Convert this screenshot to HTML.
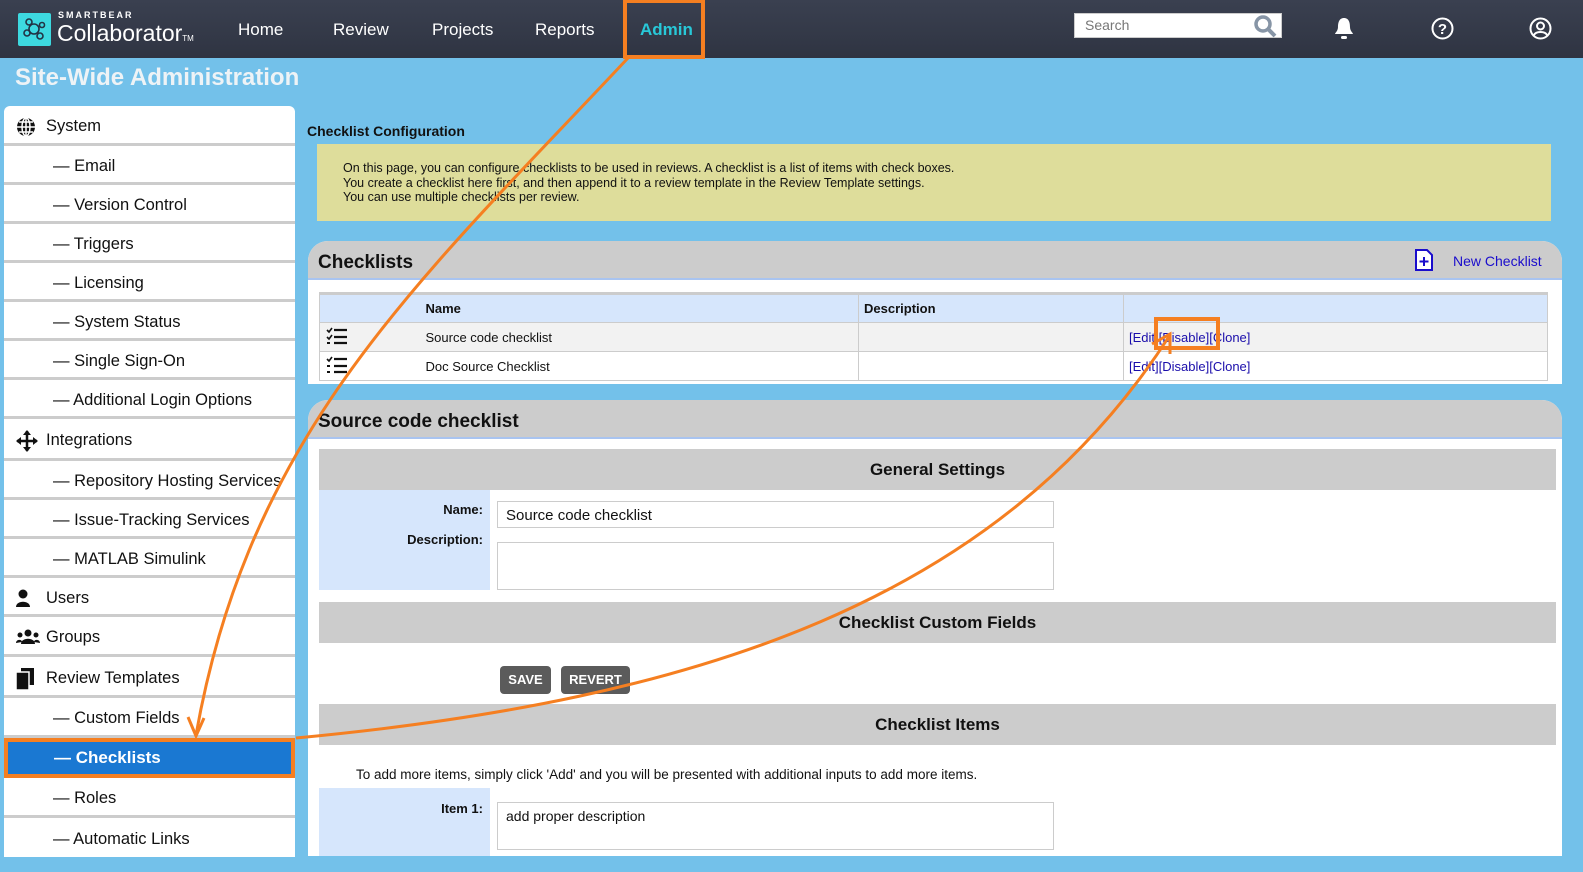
<!DOCTYPE html>
<html><head><meta charset="utf-8"><style>
*{box-sizing:border-box;margin:0;padding:0}
body{width:1583px;height:872px;overflow:hidden;background:#73c1ea;font-family:"Liberation Sans",Arial,sans-serif;position:relative;color:#111}
.nav{position:absolute;left:0;top:0;width:1583px;height:58px;background:linear-gradient(#3a4050,#2f3442)}
.nav .it{position:absolute;top:20px;color:#fff;font-size:17px}
.abs{position:absolute}
.side{position:absolute;left:4px;top:106px;width:291px;background:#fff;border-radius:6px 6px 0 0;overflow:hidden}
.side div{height:39px;border-bottom:3px solid #ccc;font-size:16.5px;display:flex;align-items:center;padding-left:49px;padding-top:4px;color:#111}
.side div.top{padding-left:42px;position:relative}
.side div.top svg{position:absolute;left:12px;top:11px}
.panel{position:absolute;left:308px;width:1254px;background:#fff}
.ph{background:#ccc;border-bottom:2px solid #a9c4f0;border-radius:20px 20px 0 0;height:39px;font-weight:bold;font-size:19px;padding:11px 0 0 10px}
table{border-collapse:collapse;font-size:13px;table-layout:fixed}
td{border:1px solid #ccc;height:29px}
.gh{position:absolute;left:11px;width:1237px;background:#ccc;height:41px;text-align:center;font-weight:bold;font-size:17px;line-height:41px}
.lab{position:absolute;left:11px;width:171px;background:#d6e6fc;text-align:right;font-weight:bold;font-size:13px;padding-right:7px}
.inp{position:absolute;left:189px;width:557px;border:1px solid #ccc;font-size:15px;padding:5px 8px}
.btn{position:absolute;top:666px;height:28px;background:#5b5b5b;color:#fff;font-weight:bold;font-size:13px;border-radius:4px;line-height:28px;text-align:center}
a{color:#1a0dab}
</style></head><body>
<div class="nav">
 <div class="abs" style="left:18px;top:13px;width:33px;height:33px;background:#3dd9e0;border-radius:2px"><svg width="33" height="33" viewBox="0 0 33 33"><g fill="none" stroke="#234" stroke-width="1.6"><circle cx="16" cy="16" r="5"/><circle cx="11" cy="9" r="3"/><circle cx="9" cy="20" r="3"/><circle cx="22" cy="23" r="3"/><circle cx="24" cy="12" r="2.5"/></g></svg></div>
 <div class="abs" style="left:58px;top:10px;color:#fff;font-size:9px;letter-spacing:2px;font-weight:bold">SMARTBEAR</div>
 <div class="abs" style="left:57px;top:20px;color:#fff;font-size:23px">Collaborator<span style="font-size:8px">TM</span></div>
 <div class="it" style="left:238px">Home</div>
 <div class="it" style="left:333px">Review</div>
 <div class="it" style="left:432px">Projects</div>
 <div class="it" style="left:535px">Reports</div>
 <div class="it" style="left:640px;color:#28c8d8;font-weight:bold">Admin</div>
 <div class="abs" style="left:1074px;top:13px;width:208px;height:25px;background:#fff;border:1px solid #ccc;color:#777;font-size:14px;padding:3px 10px">Search</div>
 <svg class="abs" style="left:1253px;top:14px" width="26" height="24"><circle cx="10" cy="10" r="7" fill="none" stroke="#8795a6" stroke-width="3.5"/><path d="M15 15l7 7" stroke="#8795a6" stroke-width="4"/></svg>
 <svg class="abs" style="left:1333px;top:17px" width="22" height="24"><path d="M11 1c-5 0-6 5-6 9 0 4-3 6-3 7h18c0-1-3-3-3-7 0-4-1-9-6-9z" fill="#fff"/><rect x="8" y="19" width="6" height="3" rx="1.5" fill="#fff"/></svg>
 <svg class="abs" style="left:1430px;top:16px" width="25" height="25"><circle cx="12.5" cy="12.5" r="10" fill="none" stroke="#fff" stroke-width="2"/><text x="12.5" y="18" fill="#fff" font-size="15" font-weight="bold" text-anchor="middle" font-family="Liberation Sans">?</text></svg>
 <svg class="abs" style="left:1528px;top:16px" width="25" height="25"><circle cx="12.5" cy="12.5" r="10" fill="none" stroke="#fff" stroke-width="2"/><circle cx="12.5" cy="10" r="3.5" fill="none" stroke="#fff" stroke-width="2"/><path d="M6 19c2-4 11-4 13 0" fill="none" stroke="#fff" stroke-width="2"/></svg>
</div>
<div class="abs" style="left:15px;top:64px;color:#eef3f6;font-size:24px;font-weight:bold">Site-Wide Administration</div>

<div class="side">
 <div class="top" style="height:40px"><svg width="20" height="20"><circle cx="10" cy="10" r="9" fill="#111"/><path d="M1 10h18M10 1v18M3 5h14M3 15h14" stroke="#fff" stroke-width="1.5"/><ellipse cx="10" cy="10" rx="4" ry="9" fill="none" stroke="#fff" stroke-width="1.5"/></svg>System</div>
 <div>— Email</div><div>— Version Control</div><div>— Triggers</div><div>— Licensing</div><div>— System Status</div><div>— Single Sign-On</div><div>— Additional Login Options</div>
 <div class="top" style="height:42px"><svg width="22" height="22"><path d="M11 1v20M1 11h20" stroke="#111" stroke-width="2.5"/><path d="M11 0l-4 5h8zM11 22l-4-5h8zM0 11l5-4v8zM22 11l-5-4v8z" fill="#111"/></svg>Integrations</div>
 <div>— Repository Hosting Services</div><div>— Issue-Tracking Services</div><div>— MATLAB Simulink</div>
 <div class="top"><svg width="20" height="20"><circle cx="7" cy="5" r="4.5" fill="#111"/><path d="M0 18c0-7 14-7 14 0z" fill="#111"/></svg>Users</div>
 <div class="top" style="height:40px"><svg width="24" height="20"><circle cx="12" cy="5" r="3.5" fill="#111"/><circle cx="4" cy="7" r="2.5" fill="#111"/><circle cx="20" cy="7" r="2.5" fill="#111"/><path d="M5 16c0-7 14-7 14 0zM0 15c0-4 6-4 6-1zM18 14c0-3 6-3 6 1z" fill="#111"/></svg>Groups</div>
 <div class="top" style="height:41px"><svg width="20" height="22"><rect x="5" y="0" width="13" height="17" fill="#111"/><rect x="0" y="4" width="13" height="18" fill="#111" stroke="#fff" stroke-width="1.5"/></svg>Review Templates</div>
 <div style="height:40px">— Custom Fields</div>
 <div style="height:40px;background:#1a78d2;color:#fff;font-weight:bold;font-size:17px;border:4px solid #f57f21;padding-left:46px;padding-top:0">— Checklists</div>
 <div style="height:40px">— Roles</div>
 <div style="height:39px;border-bottom:none">— Automatic Links</div>
</div>

<div class="abs" style="left:307px;top:123px;font-weight:bold;font-size:14px">Checklist Configuration</div>
<div class="abs" style="left:317px;top:144px;width:1234px;height:77px;background:#dedd9b;font-size:12.5px;padding:17px 0 0 26px;line-height:14.5px">On this page, you can configure checklists to be used in reviews. A checklist is a list of items with check boxes.<br>You create a checklist here first, and then append it to a review template in the Review Template settings.<br>You can use multiple checklists per review.</div>

<div class="panel" style="top:241px;height:143px;border-radius:20px 20px 0 0">
 <div class="ph">Checklists</div>
 <svg class="abs" style="left:1107px;top:8px" width="18" height="22"><path d="M1 1h11l5 5v15H1z" fill="#fff" stroke="#1a0dcc" stroke-width="2"/><path d="M9 8v9M4.5 12.5h9" stroke="#1a0dcc" stroke-width="2"/></svg>
 <div class="abs" style="left:1145px;top:12px;color:#1a0dcc;font-size:14px">New Checklist</div>
 <table class="abs" style="left:11px;top:51px;width:1229px;border-top:3px solid #ccc">
  <colgroup><col style="width:98px"><col style="width:441px"><col style="width:265px"><col></colgroup>
  <tr style="background:#d6e6fc;font-weight:bold"><td style="height:27px;border-right:none"></td><td style="padding-left:8px;border-left:none">Name</td><td style="padding-left:5px">Description</td><td></td></tr>
  <tr style="background:#f2f2f2"><td style="padding-left:6px;border-right:none"><svg width="22" height="18"><path d="M1 3l2 2 3-4M1 10l2 2 3-4" fill="none" stroke="#111" stroke-width="1.6"/><rect x="1" y="15" width="3" height="2" fill="#111"/><path d="M8 3h13M8 10h13M8 16h13" stroke="#111" stroke-width="2.2"/></svg></td><td style="padding-left:8px;border-left:none">Source code checklist</td><td></td><td style="padding-left:5px"><a>[Edit]</a><a>[Disable]</a><a>[Clone]</a></td></tr>
  <tr><td style="padding-left:6px;border-right:none"><svg width="22" height="18"><path d="M1 3l2 2 3-4" fill="none" stroke="#111" stroke-width="1.6"/><rect x="1" y="9" width="3" height="2" fill="#111"/><rect x="1" y="15" width="3" height="2" fill="#111"/><path d="M8 3h13M8 10h13M8 16h13" stroke="#111" stroke-width="2.2"/></svg></td><td style="padding-left:8px;border-left:none">Doc Source Checklist</td><td></td><td style="padding-left:5px"><a>[Edit]</a><a>[Disable]</a><a>[Clone]</a></td></tr>
 </table>
</div>

<div class="panel" style="top:400px;height:456px;border-radius:20px 20px 0 0">
 <div class="ph">Source code checklist</div>
 <div class="gh" style="top:49px">General Settings</div>
 <div class="lab" style="top:90px;height:100px;padding-top:12px">Name:<br><br>Description:</div>
 <div class="inp" style="top:101px;height:27px">Source code checklist</div>
 <div class="inp" style="top:142px;height:48px"></div>
 <div class="gh" style="top:202px">Checklist Custom Fields</div>
 <div class="gh" style="top:304px">Checklist Items</div>
 <div class="abs" style="left:48px;top:367px;font-size:13.5px">To add more items, simply click 'Add' and you will be presented with additional inputs to add more items.</div>
 <div class="lab" style="top:388px;height:68px;padding-top:13px">Item 1:</div>
 <div class="inp" style="top:402px;height:48px;font-size:14px">add proper description</div>
</div>
<div class="btn" style="left:500px;width:51px">SAVE</div>
<div class="btn" style="left:561px;width:69px">REVERT</div>

<svg class="abs" style="left:0;top:0" width="1583" height="872">
 <g fill="none" stroke="#f57f21">
  <rect x="625" y="1" width="78" height="56" stroke-width="4"/>
  <rect x="1156" y="319" width="62" height="29" stroke-width="4"/>
  <path d="M628 58C420 280 250 430 196 735" stroke-width="3"/>
  <path d="M188 717l8 19 8-18" stroke-width="3"/>
  <path d="M296 738C700 700 1000 600 1170 335" stroke-width="3"/>
  <path d="M1152 344l18-10 0 20" stroke-width="3"/>
 </g>
</svg>
</body></html>
